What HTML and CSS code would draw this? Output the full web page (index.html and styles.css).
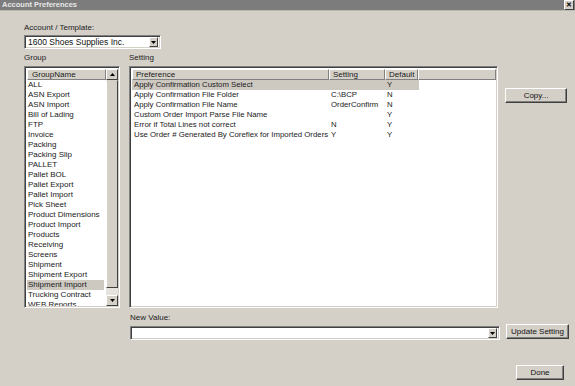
FILE: index.html
```html
<!DOCTYPE html>
<html lang="en">
<head>
<meta charset="UTF-8" />
<title>Account Preferences</title>
<link rel="stylesheet" href="styles.css">
</head>
<body>

<!-- Title bar -->
<div class="titlebar">
  <span class="title">Account Preferences</span>
  <span class="close">&#x2715;</span>
</div>

<div class="main">
  <div class="label">Account / Template:</div>
  <div class="combo account">
    <span class="combo-text">1600 Shoes Supplies Inc.</span>
    <span class="arrow-btn"><svg width="5" height="3" viewBox="0 0 5 3"><path d="M0 0h5L2.5 3z" fill="#000"/></svg></span>
  </div>

  <div class="panes">
    <!-- Group list -->
    <div class="group-pane">
      <div class="label">Group</div>
      <div class="sunken list-box">
        <div class="list-col">
          <div class="head-cell">GroupName</div>
          <div class="item">ALL</div>
          <div class="item">ASN Export</div>
          <div class="item">ASN Import</div>
          <div class="item">Bill of Lading</div>
          <div class="item">FTP</div>
          <div class="item">Invoice</div>
          <div class="item">Packing</div>
          <div class="item">Packing Slip</div>
          <div class="item">PALLET</div>
          <div class="item">Pallet BOL</div>
          <div class="item">Pallet Export</div>
          <div class="item">Pallet Import</div>
          <div class="item">Pick Sheet</div>
          <div class="item">Product Dimensions</div>
          <div class="item">Product Import</div>
          <div class="item">Products</div>
          <div class="item">Receiving</div>
          <div class="item">Screens</div>
          <div class="item">Shipment</div>
          <div class="item">Shipment Export</div>
          <div class="item selected">Shipment Import</div>
          <div class="item">Trucking Contract</div>
          <div class="item">WEB Reports</div>
        </div>
        <div class="scrollbar">
          <span class="scroll-btn"><svg width="5" height="3" viewBox="0 0 5 3"><path d="M0 3h5L2.5 0z" fill="#000"/></svg></span>
          <span class="thumb"></span>
          <span class="track"></span>
          <span class="scroll-btn"><svg width="5" height="3" viewBox="0 0 5 3"><path d="M0 0h5L2.5 3z" fill="#000"/></svg></span>
        </div>
      </div>
    </div>

    <!-- Settings table -->
    <div class="setting-pane">
      <div class="label">Setting</div>
      <div class="sunken grid-box">
        <div class="grid-row header">
          <div class="head-cell">Preference</div>
          <div class="head-cell">Setting</div>
          <div class="head-cell">Default</div>
          <div class="head-cell filler"></div>
        </div>
        <div class="grid-row selected">
          <div>Apply Confirmation Custom Select</div><div></div><div>Y</div>
        </div>
        <div class="grid-row">
          <div>Apply Confirmation File Folder</div><div>C:\BCP</div><div>N</div>
        </div>
        <div class="grid-row">
          <div>Apply Confirmation File Name</div><div>OrderConfirm</div><div>N</div>
        </div>
        <div class="grid-row">
          <div>Custom Order Import Parse File Name</div><div></div><div>Y</div>
        </div>
        <div class="grid-row">
          <div>Error if Total Lines not correct</div><div>N</div><div>Y</div>
        </div>
        <div class="grid-row">
          <div>Use Order # Generated By Coreflex for Imported Orders</div><div>Y</div><div>Y</div>
        </div>
      </div>
    </div>

    <div class="side">
      <button class="btn copy">Copy...</button>
    </div>
  </div>

  <!-- New value -->
  <div class="new-value">
    <div class="label">New Value:</div>
    <div class="new-row">
      <div class="combo value">
        <span class="combo-text"></span>
        <span class="arrow-btn"><svg width="5" height="3" viewBox="0 0 5 3"><path d="M0 0h5L2.5 3z" fill="#000"/></svg></span>
      </div>
      <button class="btn update">Update Setting</button>
    </div>
  </div>

  <div class="footer">
    <button class="btn done">Done</button>
  </div>
</div>

</body>
</html>
```

FILE: styles.css
```css
/* Base */
body, html {
  margin: 0; padding: 0;
  background: #d4d0c8;
  font-family: 'Liberation Sans', Arial, sans-serif;
  font-size: 8px;
  color: #1a1a1a;
  overflow: hidden;
}

/* Title bar */
.titlebar {
  height: 10px;
  background: #7c7c7c;
  border-bottom: 1px solid #bdb9b1;
  display: flex;
  justify-content: space-between;
  align-items: center;
  padding: 0 1px 0 2px;
}
.title {
  color: #e8e8e8;
  font-weight: bold;
  font-size: 7.5px;
  line-height: 10px;
}
.close {
  width: 8px;
  height: 8px;
  background: #d4d0c8;
  border: 1px solid #fff;
  border-right-color: #404040;
  border-bottom-color: #404040;
  font-size: 7px;
  line-height: 8px;
  text-align: center;
  font-weight: bold;
  color: #000;
}

.main {
  padding: 12px 0 0 24px;
}
.label {
  line-height: 10px;
  height: 10px;
  color: #222;
}

/* Sunken frames */
.sunken, .combo {
  border: 1px solid;
  border-color: #808080 #fff #fff #808080;
  box-shadow: inset 1px 1px 0 #404040, inset -1px -1px 0 #d4d0c8;
  background: #fff;
  box-sizing: border-box;
}

/* Combos */
.combo {
  display: flex;
  align-items: center;
  height: 14px;
  padding: 2px;
}
.account {
  width: 137px;
  margin-top: 2px;
}
.combo-text {
  flex: 1;
  font-size: 8.5px;
  line-height: 10px;
  padding-left: 1px;
  color: #111;
}
.arrow-btn, .scroll-btn {
  width: 9px;
  height: 10px;
  box-sizing: border-box;
  background: #d4d0c8;
  border: 1px solid;
  border-color: #fff #404040 #404040 #fff;
  display: flex;
  align-items: center;
  justify-content: center;
}

/* Panes */
.panes {
  display: flex;
  margin-top: 4px;
}
.panes .label {
  margin-bottom: 3px;
}
.group-pane {
  width: 96px;
  margin-right: 9px;
}
.setting-pane {
  width: 369px;
  margin-right: 7px;
}
.side {
  padding-top: 35px;
}

/* Group list */
.list-box {
  height: 242px;
  display: flex;
  padding: 2px 1px 1px 2px;
  overflow: hidden;
}
.list-col {
  flex: 1;
  overflow: hidden;
}
.head-cell {
  height: 11px;
  line-height: 10px;
  box-sizing: border-box;
  background: #d4d0c8;
  border: 1px solid;
  border-color: #fff #808080 #808080 #fff;
  padding-left: 3px;
  white-space: nowrap;
  overflow: hidden;
}
.list-col .head-cell {
  padding-left: 4px;
}
.item {
  height: 10px;
  line-height: 10px;
  padding-left: 1px;
  white-space: nowrap;
  font-size: 8px;
}
.item.selected {
  background: #cdc9c1;
  margin-right: 2px;
}

.scrollbar {
  width: 12px;
  display: flex;
  flex-direction: column;
}
.scrollbar .scroll-btn {
  width: 12px;
  height: 11px;
}
.thumb {
  height: 208px;
  box-sizing: border-box;
  background: #d4d0c8;
  border: 1px solid;
  border-color: #d4d0c8 #404040 #404040 #fff;
}
.track {
  flex: 1;
  background: #e6e3de;
}

/* Settings grid */
.grid-box {
  height: 242px;
  padding: 2px 1px 1px 2px;
  overflow: hidden;
}
.grid-row {
  display: grid;
  grid-template-columns: 197px 56px 33px 1fr;
  height: 10px;
  line-height: 10px;
  white-space: nowrap;
  font-size: 7.8px;
}
.grid-row > div {
  padding-left: 2px;
  overflow: hidden;
}
.grid-row.header {
  height: 11px;
  font-size: 8px;
}
.grid-row.header .head-cell {
  padding-left: 3px;
}
.grid-row.selected {
  grid-template-columns: 197px 56px 34px 1fr;
}
.grid-row.selected > div:nth-child(-n+3) {
  background: #cdc9c1;
}

/* Buttons */
.btn {
  font-family: inherit;
  font-size: 8px;
  color: #111;
  background: #d4d0c8;
  border: 1px solid;
  border-color: #fff #404040 #404040 #fff;
  box-shadow: inset -1px -1px 0 #808080;
  padding: 0;
  height: 15px;
  line-height: 12px;
}
.copy {
  width: 62px;
}

/* New value row */
.new-value {
  margin: 5px 0 0 106px;
}
.new-row {
  display: flex;
  align-items: flex-start;
  margin-top: 3px;
}
.value {
  width: 370px;
}
.value .combo-text {
  height: 10px;
}
.update {
  width: 63px;
  margin-left: 6px;
  margin-top: -2px;
}

.footer {
  display: flex;
  justify-content: flex-end;
  padding-right: 11px;
  margin-top: 25px;
}
.done {
  width: 48px;
}
```
